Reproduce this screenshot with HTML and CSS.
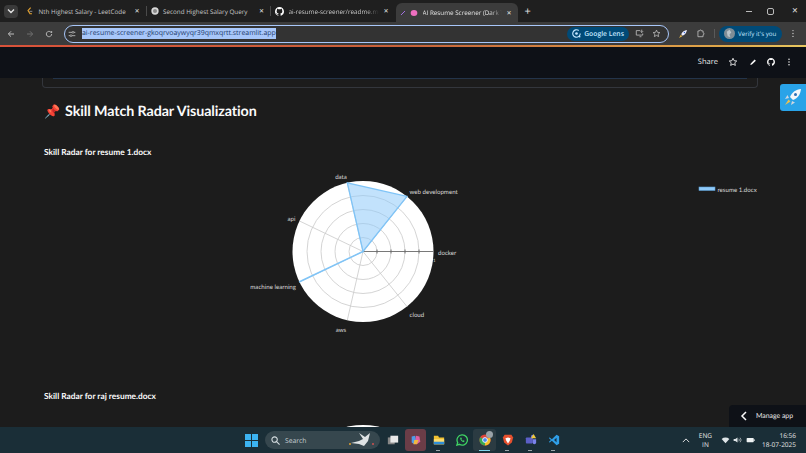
FILE: index.html
```html
<!DOCTYPE html>
<html lang="en">
<head>
    <meta charset="UTF-8">
    <title>AI Resume Screener</title>
    <link rel="stylesheet" href="styles.css">
</head>
<body>
    <svg class="defs" width="0" height="0">
        <symbol id="gh" viewBox="0 0 16 16"><path fill="currentColor" d="M8 0C3.6 0 0 3.6 0 8c0 3.5 2.3 6.5 5.5 7.6.4.1.5-.2.5-.4v-1.400c-2.2.5-2.7-1-2.700-1-.4-.9-.9-1.200-.9-1.200-.7-.5.1-.5.1-.5.8.1 1.200.8 1.200.8.7 1.200 1.900.9 2.300.7.1-.5.3-.9.5-1.100-1.800-.2-3.600-.9-3.600-4 0-.9.3-1.600.8-2.100-.1-.2-.4-1 .1-2.100 0 0 .7-.2 2.200.8.6-.2 1.300-.3 2-.3s1.400.1 2 .3c1.500-1 2.200-.8 2.200-.8.4 1.100.2 1.900.1 2.100.5.6.8 1.300.8 2.100 0 3.100-1.900 3.700-3.700 3.900.3.3.6.8.6 1.500v2.200c0 .2.1.5.6.4C13.700 14.500 16 11.500 16 8c0-4.400-3.600-8-8-8z"/></symbol>
        <symbol id="star" viewBox="0 0 24 24"><path fill="none" stroke="currentColor" stroke-width="2" d="M12 3l2.700 5.900 6.300.7-4.700 4.300 1.300 6.300L12 17l-5.600 3.200 1.300-6.300L3 9.600l6.300-.7z"/></symbol>
    </svg>

    <div class="tabstrip">
        <div class="tab-search"><svg width="8" height="8" viewBox="0 0 8 8"><path d="M1 2.500l3 3 3-3" fill="none" stroke="#e3e3e3" stroke-width="1.400"/></svg></div>
        <div class="tab">
            <svg class="fav" viewBox="0 0 12 12"><path d="M7 1L3 5.500 6 10h3" fill="none" stroke="#e0a030" stroke-width="1.600"/><path d="M5 6.500h4.500" stroke="#999" stroke-width="1.300"/></svg>
            <span class="tab-title">Nth Highest Salary - LeetCode</span><span class="tab-x">✕</span>
        </div>
        <div class="tab-sep"></div>
        <div class="tab">
            <svg class="fav" viewBox="0 0 12 12"><circle cx="6" cy="6" r="5.500" fill="#d8d8d8"/><circle cx="6" cy="6" r="3" fill="#8a8a8a"/></svg>
            <span class="tab-title">Second Highest Salary Query</span><span class="tab-x">✕</span>
        </div>
        <div class="tab-sep"></div>
        <div class="tab">
            <svg class="fav fav-gh"><use href="#gh"/></svg>
            <span class="tab-title fade">ai-resume-screener/readme.md</span><span class="tab-x">✕</span>
        </div>
        <div class="tab tab-active">
            <svg class="fav fav-small" viewBox="0 0 12 12"><path d="M2 10L10 2" stroke="#a070e0" stroke-width="2"/></svg>
            <svg class="fav" viewBox="0 0 12 12"><ellipse cx="6" cy="6" rx="5" ry="4.500" fill="#ee6fc0"/></svg>
            <span class="tab-title fade">AI Resume Screener (Dark T</span><span class="tab-x">✕</span>
        </div>
        <div class="tab-new">+</div>
        <div class="win-controls">
            <span class="win-min"></span>
            <span class="win-max"></span>
            <span class="win-close">✕</span>
        </div>
    </div>

    <div class="toolbar">
        <svg class="nav" viewBox="0 0 12 12"><path d="M10.500 6h-8M6 2L2 6l4 4" fill="none" stroke="#c7c7c7" stroke-width="1.400"/></svg>
        <svg class="nav" viewBox="0 0 12 12"><path d="M1.500 6h8M6 2l4 4-4 4" fill="none" stroke="#737373" stroke-width="1.400"/></svg>
        <svg class="nav" viewBox="0 0 12 12"><path d="M10 6a4 4 0 1 1-1.200-2.800L10 4.400V1.500" fill="none" stroke="#c7c7c7" stroke-width="1.300"/></svg>
        <div class="omnibox">
            <svg class="tune" viewBox="0 0 12 12"><path d="M1 3.500h5M9 3.500h2M1 8.500h2M6 8.500h5" stroke="#c7c7c7" stroke-width="1.200"/><circle cx="7.500" cy="3.500" r="1.400" fill="none" stroke="#c7c7c7"/><circle cx="4.500" cy="8.500" r="1.400" fill="none" stroke="#c7c7c7"/></svg>
            <span class="url">ai-resume-screener-gkoqrvoaywyqr39qmxqrtt.streamlit.app</span>
            <span class="lens">
                <svg width="9" height="9" viewBox="0 0 12 12"><path d="M9 2A5 5 0 1 0 11 6M9 9l2 2" fill="none" stroke="#c2e7ff" stroke-width="1.500"/><circle cx="6" cy="6" r="1.800" fill="#c2e7ff"/></svg>
                Google Lens
            </span>
            <svg class="omni-icon" viewBox="0 0 14 14"><path d="M8 2.500H2v7h10V7M7 12h3M10.500 1v4M8.500 3.500l2 2 2-2" fill="none" stroke="#c7c7c7" stroke-width="1.200"/></svg>
            <svg class="omni-star"><use href="#star"/></svg>
        </div>
        <svg class="ext-rocket" viewBox="0 0 14 14"><path d="M12.500 1.500C9 2 6 4 4.500 7.500l2 2C10 8 12 5 12.500 1.500z" fill="#eef"/><path d="M4 8l-2.500 4.500L6 10z" fill="#e9b949"/><circle cx="9" cy="5" r="1" fill="#3c6fd0"/></svg>
        <svg class="ext-puzzle" viewBox="0 0 14 14"><path d="M3 3h2.500a1.500 1.500 0 0 1 3 0H11v3a1.500 1.500 0 0 1 0 3v3H3z" fill="none" stroke="#c7c7c7" stroke-width="1.200"/></svg>
        <div class="tool-sep"></div>
        <div class="verify">
            <svg width="11" height="11" viewBox="0 0 12 12"><circle cx="6" cy="6" r="6" fill="#7f8d96"/><path d="M3 4l3-2 2 3-2 2 1 3-3-1z" fill="#b9c4ca"/></svg>
            Verify it's you
        </div>
        <svg class="tool-dots" viewBox="0 0 4 14"><circle cx="2" cy="2.500" r="1.100" fill="#c7c7c7"/><circle cx="2" cy="7" r="1.100" fill="#c7c7c7"/><circle cx="2" cy="11.500" r="1.100" fill="#c7c7c7"/></svg>
    </div>
    <div class="accent"></div>

    <header class="st-header">
        <span class="share">Share</span>
        <svg class="st-icon st-star"><use href="#star"/></svg>
        <svg class="st-icon" viewBox="0 0 12 12"><path d="M2 10.500l.6-2.400L8.500 2.200l1.800 1.800-5.900 5.900z" fill="#fafafa"/></svg>
        <svg class="st-icon"><use href="#gh"/></svg>
        <svg class="st-icon" viewBox="0 0 12 12"><circle cx="6" cy="2" r="1.100" fill="#fafafa"/><circle cx="6" cy="6" r="1.100" fill="#fafafa"/><circle cx="6" cy="10" r="1.100" fill="#fafafa"/></svg>
    </header>

    <main class="content">
        <div class="card-stub"></div>
        <h1 class="page-title"><span class="pin">📌</span>Skill Match Radar Visualization</h1>
        <h3 class="chart-title first">Skill Radar for resume 1.docx</h3>

        <svg class="chart" viewBox="44 165 714 200" width="714" height="200">
            <circle cx="363" cy="251.500" r="70.500" fill="#fff"/>
            <g fill="none" stroke="#c9c9c9" stroke-width="0.800">
                <circle cx="363" cy="251.500" r="14"/>
                <circle cx="363" cy="251.500" r="28"/>
                <circle cx="363" cy="251.500" r="42"/>
                <circle cx="363" cy="251.500" r="56"/>
                <path d="M363 251.500L407 196.400M363 251.500L347.300 182.800M363 251.500L299.500 282M363 251.500L299.500 221M363 251.500L347.300 320.200M363 251.500L407 306.600"/>
            </g>
            <path d="M363 251.500H433.500M377 249.500v4M391 249.500v4M405 249.500v4M419 249.500v4" stroke="#6a6a6a" stroke-width="0.900" fill="none"/>
            <path d="M363 251.500L407 196.400L347.300 182.800Z" fill="#8fcaf9" fill-opacity="0.550" stroke="#7fc4f7" stroke-width="1.300"/>
            <path d="M363 251.500L299 282" stroke="#7fc4f7" stroke-width="1.500"/>
            <g class="chart-label">
                <text x="341" y="178.500" text-anchor="middle">data</text>
                <text x="409.500" y="193.500">web development</text>
                <text x="291.500" y="221" text-anchor="middle">api</text>
                <text x="438" y="254.500">docker</text>
                <text x="296" y="289" text-anchor="end">machine learning</text>
                <text x="341" y="332" text-anchor="middle">aws</text>
                <text x="409.500" y="316.500">cloud</text>
                <text x="433" y="262" class="tick">1</text>
                <text x="717.500" y="191.500">resume 1.docx</text>
            </g>
            <rect x="699" y="187" width="16" height="3.500" fill="#8fcaf9" stroke="#5b9bd0" stroke-width="0.600"/>
        </svg>

        <h3 class="chart-title second">Skill Radar for raj resume.docx</h3>
        <div class="next-chart">
            <span class="next-arc"></span>
        </div>

        <a class="rocket-btn">
            <svg width="20" height="20" viewBox="0 0 20 20"><path d="M18 2c-5 .5-9 3-11 8l3 3c5-2 7.500-6 8-11z" fill="#f4f6fa"/><path d="M6 11l-4 1 2.500-4zM9 14l-1 4 4-2.500z" fill="#cfd6e0"/><path d="M5.500 12.500L2 18l5.500-3.500z" fill="#f0c14b"/><circle cx="12.500" cy="7.500" r="1.500" fill="#2f6fb5"/></svg>
        </a>
        <div class="manage-app">
            <svg width="8" height="10" viewBox="0 0 8 10"><path d="M6 1L2 5l4 4" fill="none" stroke="#fafafa" stroke-width="1.500"/></svg>
            <span>Manage app</span>
        </div>
    </main>

    <footer class="taskbar">
        <svg class="win-logo" viewBox="0 0 13 13"><path fill="#3cb4f2" d="M0 0h6v6H0zM7 0h6v6H7zM0 7h6v6H0zM7 7h6v6H7z"/></svg>
        <div class="task-search">
            <svg width="9" height="9" viewBox="0 0 10 10"><circle cx="4" cy="4" r="3" fill="none" stroke="#d5dde0" stroke-width="1.200"/><path d="M6.500 6.500L9.500 9.500" stroke="#d5dde0" stroke-width="1.200"/></svg>
            <span>Search</span>
            <svg class="dove" viewBox="0 0 28 16"><path d="M3 11l8-2 4-2-4-6 6 4 5-4-2 8-4 5-5-2z" fill="#dfe3e4"/><circle cx="2" cy="12" r="1" fill="#e0a030"/><circle cx="25" cy="12" r="1" fill="#d05050"/></svg>
        </div>
        <svg class="task-icon taskview" viewBox="0 0 14 14"><rect x="1" y="4" width="8" height="8" fill="#888"/><rect x="4" y="2" width="9" height="8" fill="#e8e8e8"/></svg>
        <div class="task-slot slot-copilot">
            <svg class="task-icon" viewBox="0 0 14 14"><path d="M2 3l4-1 1 5-2 5-3-2z" fill="#4f9be8"/><path d="M7 2l4 1 1 6-4 3-2-3z" fill="#e05fa0"/><path d="M5 7h5l-2 5H4z" fill="#f0b840"/></svg>
        </div>
        <div class="task-slot">
            <svg class="task-icon" viewBox="0 0 14 14"><path d="M1 2h5l1 2h6v8H1z" fill="#f1c232"/><path d="M1 6h12v6H1z" fill="#ffdf70"/><path d="M1 9h12v3H1z" fill="#2f8fd8"/></svg><i></i>
        </div>
        <div class="task-slot">
            <svg class="task-icon" viewBox="0 0 14 14"><path d="M7 1a6 6 0 0 0-5 9l-1 3 3-1a6 6 0 1 0 3-11z" fill="none" stroke="#3fd263" stroke-width="1.500"/><path d="M4.800 4.500c0 3 2 5 4.600 5l.6-1.500-1.500-.8-.7.600c-.8-.4-1.200-.9-1.500-1.600l.6-.7-.7-1.500z" fill="#3fd263"/></svg>
        </div>
        <div class="task-slot slot-chrome">
            <svg class="task-icon" viewBox="0 0 14 14"><circle cx="7" cy="7" r="6.500" fill="#e0453a"/><path d="M7 7L1.400 3.800A6.500 6.500 0 0 0 7 13.500z" fill="#38a853"/><path d="M7 7l5.600-3.200A6.500 6.500 0 0 1 7 13.500z" fill="#f6c02c"/><circle cx="7" cy="7" r="2.800" fill="#4a8af4" stroke="#fff"/></svg>
            <span class="chrome-badge"></span><i class="active"></i>
        </div>
        <div class="task-slot">
            <svg class="task-icon" viewBox="0 0 14 14"><path d="M3 1h8l2 3-1.500 6L7 13.500 2.500 10 1 4z" fill="#e5502e"/><path d="M7 4l3 1-1 3-2 3-2-3-1-3z" fill="#fff"/></svg><i></i>
        </div>
        <div class="task-slot">
            <svg class="task-icon" viewBox="0 0 14 14"><rect x="1" y="4" width="8" height="7" rx="1" fill="#5b5fc7"/><circle cx="9" cy="3" r="2" fill="#7b83eb"/><path d="M9 6h4v4a2 2 0 0 1-4 0z" fill="#7b83eb"/><path d="M10 0l3 5h-6z" fill="#f0c93a"/></svg><i></i>
        </div>
        <div class="task-slot">
            <svg class="task-icon" viewBox="0 0 14 14"><path d="M10 1l3 1.500v9L10 13 4.500 8 2 10 1 9.300 3.300 7 1 4.700 2 4l2.500 2z" fill="#2f9fe8"/><path d="M10 4.300L7 7l3 2.700z" fill="#16324a"/></svg><i></i>
        </div>

        <div class="tray">
            <svg class="tray-chev" viewBox="0 0 10 6"><path d="M1 5l4-4 4 4" fill="none" stroke="#e6e6e6" stroke-width="1.200"/></svg>
            <div class="lang">ENG<br>IN</div>
            <svg class="tray-icon" viewBox="0 0 14 12"><path d="M1 4.500a9 9 0 0 1 12 0L7 11z" fill="#dfe5e8"/></svg>
            <svg class="tray-icon" viewBox="0 0 14 12"><path d="M1 4.500h2.500L7 2v8L3.500 7.500H1z" fill="#dfe5e8"/><path d="M9 4a3 3 0 0 1 0 4M11 2.500a5 5 0 0 1 0 7" fill="none" stroke="#dfe5e8"/></svg>
            <svg class="tray-icon" viewBox="0 0 14 12"><rect x="1" y="3" width="11" height="6.500" rx="1" fill="#eef2f3"/><rect x="12" y="5" width="1.500" height="2.500" fill="#eef2f3"/></svg>
            <div class="clock">16:56<br>18-07-2025</div>
        </div>
    </footer>
</body>
</html>
```

FILE: styles.css
```css
* {
    box-sizing: border-box;
}

html, body {
    margin: 0;
    height: 453px;
    overflow: hidden;
}

body {
    display: flex;
    flex-direction: column;
    width: 806px;
    background: #1c1c1c;
    font-family: "Open Sans", sans-serif;
    color: #e3e3e3;
    text-rendering: geometricPrecision;
}

.defs {
    position: absolute;
}

/* browser chrome */
.tabstrip {
    display: flex;
    align-items: center;
    height: 22px;
    padding-left: 4px;
    background: #1f1f1f;
    flex-shrink: 0;
}

.tab-search {
    display: flex;
    align-items: center;
    justify-content: center;
    width: 14px;
    height: 13px;
    margin-right: 4px;
    border-radius: 4px;
    background: #3a3a3a;
}

.tab {
    display: flex;
    align-items: center;
    width: 123.500px;
    height: 22px;
    padding: 0 6px 0 4px;
    font-size: 6.300px;
    color: #c7c7c7;
}

.tab-active {
    width: 122px;
    margin-left: 1px;
    margin-top: 3px;
    height: 19px;
    background: #3c3c3c;
    border-radius: 6px 6px 0 0;
    color: #e3e3e3;
}

.tab-sep {
    width: 1px;
    height: 10px;
    background: #4a4a4a;
}

.fav {
    width: 8px;
    height: 8px;
    margin-right: 4.500px;
    flex-shrink: 0;
}

.fav-gh {
    color: #fff;
    width: 9px;
    height: 9px;
}

.fav-small {
    margin-right: 4.500px;
    width: 6px;
    height: 6px;
}

.tab-title {
    flex: 1;
    min-width: 0;
    white-space: nowrap;
}

.fade {
    mask-image: linear-gradient(to right, #000 85%, transparent);
}

.tab-x {
    margin-left: 4px;
    font-size: 6px;
    color: #e3e3e3;
}

.tab-new {
    margin-left: 7px;
    font-size: 11px;
    color: #e3e3e3;
}

.win-controls {
    display: flex;
    align-items: center;
    margin-left: auto;
    padding-right: 8px;
    gap: 15px;
    font-size: 7.500px;
}

.win-min {
    width: 6px;
    height: 1px;
    background: #bbb;
}

.win-max {
    width: 7px;
    height: 7px;
    border: 1px solid #bbb;
    border-radius: 2px;
}

.win-close {
    margin-left: 3px;
}

.toolbar {
    display: flex;
    align-items: center;
    height: 23px;
    padding-left: 7px;
    background: #3c3c3c;
    flex-shrink: 0;
}

.nav {
    width: 8px;
    height: 8px;
    margin-right: 11px;
}

.omnibox {
    display: flex;
    align-items: center;
    width: 605px;
    height: 18px;
    padding: 0 7px 0 3px;
    border: 1px solid #a8c7fa;
    border-radius: 9px;
    background: #333;
    font-size: 6.950px;
}

.tune {
    width: 8px;
    height: 8px;
    margin-right: 6px;
}

.url {
    background: #a8c7fa;
    color: #1c3a6a;
    white-space: nowrap;
    line-height: 11px;
}

.lens {
    display: flex;
    align-items: center;
    gap: 3px;
    height: 14px;
    margin-left: auto;
    padding: 0 5px;
    border-radius: 7px;
    background: #004a77;
    color: #c2e7ff;
    font-size: 6.800px;
    font-weight: 600;
    white-space: nowrap;
}

.omni-icon {
    width: 9px;
    height: 9px;
    margin-left: 6px;
}

.omni-star {
    width: 9px;
    height: 9px;
    margin-left: 8px;
    color: #c7c7c7;
}

.ext-rocket {
    width: 10px;
    height: 10px;
    margin-left: 9px;
}

.ext-puzzle {
    width: 9px;
    height: 9px;
    margin-left: 8px;
}

.tool-sep {
    width: 1px;
    height: 9px;
    margin-left: 9px;
    background: #5a5a5a;
}

.verify {
    display: flex;
    align-items: center;
    gap: 3px;
    width: 63px;
    height: 16px;
    margin-left: 4px;
    padding-left: 5px;
    border-radius: 8px;
    background: #004a77;
    color: #c2e7ff;
    font-size: 6.200px;
    white-space: nowrap;
}

.tool-dots {
    width: 4px;
    height: 9px;
    margin-left: 9px;
}

.accent {
    height: 1.500px;
    flex-shrink: 0;
    background: linear-gradient(to right, #d9523a, #c7613a 50%, #e0a84a 90%, #e8c860);
}

/* streamlit header */
.st-header {
    display: flex;
    align-items: center;
    justify-content: flex-end;
    gap: 10px;
    height: 31px;
    padding: 0 13px 0 0;
    background: #0e1117;
    flex-shrink: 0;
}

.share {
    font-size: 7.500px;
    font-weight: 500;
    color: #eaeaea;
}

.st-icon {
    width: 8px;
    height: 8px;
    color: #fafafa;
}

.st-star {
    width: 10px;
    height: 10px;
    margin-right: 1px;
}

/* page content */
.content {
    position: relative;
    flex: 1;
    min-height: 0;
    overflow: hidden;
    padding: 0 48px 0 44px;
    background: #1c1c1c;
    font-family: Lato, sans-serif;
    color: #fafafa;
}

.card-stub {
    position: relative;
    width: 716px;
    height: 10px;
    margin-left: -2px;
    border: 1px solid #33363c;
    border-top: 0;
    border-radius: 0 0 4px 4px;
}

.card-stub::before {
    content: "";
    display: block;
    height: 1px;
    margin: 0 10px;
    background: #23344a;
}

.page-title {
    display: flex;
    align-items: center;
    margin: 13px 0 0;
    font-size: 14.300px;
    letter-spacing: -0.100px;
    line-height: 21px;
    font-weight: 700;
}

.pin {
    width: 21px;
    font-size: 13px;
    font-family: "Noto Sans", sans-serif;
    color: #e8456b;
}

.chart-title {
    margin: 0;
    font-size: 8.350px;
    line-height: 12px;
    font-weight: 700;
}

.first {
    margin-top: 24.500px;
}

.second {
    margin-top: 25px;
}

.chart {
    display: block;
    margin-top: 7px;
    overflow: visible;
}

.chart-label text {
    font-family: Lato, sans-serif;
    font-size: 6.150px;
    fill: #d8d8d8;
}

.chart-label .tick {
    font-size: 4.500px;
}

.next-chart {
    position: absolute;
    left: 0;
    right: 0;
    top: 347px;
    height: 3px;
    overflow: hidden;
}

.next-arc {
    display: block;
    width: 140px;
    height: 140px;
    margin-left: 293px;
    border-radius: 50%;
    background: #fff;
}

.rocket-btn {
    position: absolute;
    top: 6px;
    right: 0;
    display: flex;
    align-items: center;
    justify-content: center;
    width: 26px;
    height: 27px;
    border-radius: 3px 0 0 3px;
    background: #29a3e8;
}

.manage-app {
    position: absolute;
    right: 0;
    bottom: 0;
    display: flex;
    align-items: center;
    gap: 8px;
    width: 77px;
    height: 22px;
    padding-left: 11px;
    border-radius: 4px 0 0 0;
    background: #0e1117;
    font-size: 6.900px;
    color: #eaeaea;
    white-space: nowrap;
}

/* windows taskbar */
.taskbar {
    display: flex;
    align-items: center;
    height: 26px;
    padding-left: 245px;
    background: #1a2e37;
    flex-shrink: 0;
    color: #e6e6e6;
}

.win-logo {
    width: 13px;
    height: 13px;
}

.task-search {
    display: flex;
    align-items: center;
    gap: 5px;
    width: 115px;
    height: 18px;
    margin-left: 7px;
    padding-left: 6px;
    border-radius: 9px;
    background: #36474e;
    font-size: 6.800px;
    color: #c5ced2;
}

.dove {
    width: 28px;
    height: 16px;
    margin-left: auto;
    margin-right: 4px;
}

.task-icon {
    width: 12px;
    height: 12px;
}

.taskview {
    margin-left: 7px;
    margin-right: 6px;
}

.task-slot {
    position: relative;
    display: flex;
    align-items: center;
    justify-content: center;
    width: 23px;
    height: 22px;
    border-radius: 3px;
}

.task-slot i {
    position: absolute;
    bottom: 0;
    left: 9px;
    width: 4px;
    height: 1.500px;
    background: #9aa5aa;
}

.task-slot i.active {
    left: 6px;
    width: 11px;
    background: #7fd6ee;
}

.slot-copilot {
    background: #6b3d47;
    width: 21px;
    margin-right: 1px;
}

.slot-chrome {
    background: #2b3b42;
}

.chrome-badge {
    position: absolute;
    top: 2px;
    right: 3px;
    width: 7px;
    height: 7px;
    border-radius: 50%;
    background: #9aa3a8;
}

.tray {
    display: flex;
    align-items: center;
    margin-left: auto;
    padding-right: 10px;
    font-size: 6.500px;
    line-height: 9px;
    text-align: center;
}

.tray-chev {
    width: 8px;
    height: 5px;
    margin-right: 9px;
}

.lang {
    margin-right: 8.500px;
}

.tray-icon {
    width: 9px;
    height: 8px;
    margin-right: 3.500px;
}

.clock {
    margin-left: 4px;
    text-align: right;
}
```
